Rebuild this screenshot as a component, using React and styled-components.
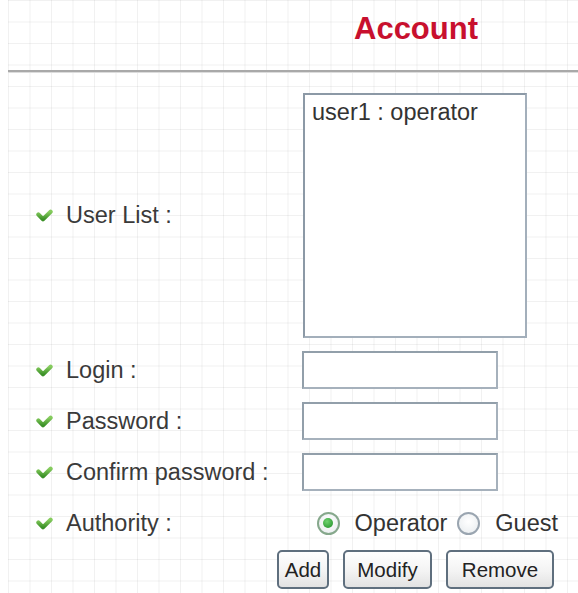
import React, { useState } from 'react';
import styled, { createGlobalStyle } from 'styled-components';

const GlobalStyle = createGlobalStyle`
  html, body {
    margin: 0;
    padding: 0;
    background: #ffffff;
  }
  body {
    font-family: "Liberation Sans", Arial, sans-serif;
    color: #333;
  }
`;

const Page = styled.div`
  width: 578px;
  min-height: 593px;
  box-sizing: border-box;
  padding-left: 8px;
  background-color: #fff;
  background-image:
    linear-gradient(to right, rgba(0, 0, 0, 0.055) 1px, transparent 1px),
    linear-gradient(to bottom, rgba(0, 0, 0, 0.055) 1px, transparent 1px);
  background-size: 21.5px 21.5px;
  background-position: 8px 0;
  background-clip: content-box;
`;

const Header = styled.div`
  display: grid;
  grid-template-columns: 294px 228px;
  height: 70px;
  align-items: center;
`;

const Title = styled.h1`
  grid-column: 2;
  margin: 0;
  padding-bottom: 12px;
  text-align: center;
  font-size: 31px;
  font-weight: bold;
  color: #c8102e;
`;

const Rule = styled.div`
  height: 2px;
  background: #a9a9a9;
  border-bottom: 1px solid #dcdcdc;
`;

const Form = styled.div`
  display: grid;
  grid-template-columns: 294px 1fr;
  row-gap: 13px;
  padding: 20px 20px 0 0;
  align-items: center;
`;

const Label = styled.div`
  display: flex;
  align-items: center;
  gap: 13px;
  padding-left: 28px;
  font-size: 23.5px;
  color: #3a3a3a;
  white-space: nowrap;
`;

const ListBox = styled.div`
  width: 224px;
  height: 245px;
  box-sizing: border-box;
  margin-left: 1px;
  padding: 3px 7px;
  background: #fff;
  border: 2px solid #a3afbb;
  border-top-color: #8c99a6;
  border-left-color: #8c99a6;
  font-size: 23.5px;
  line-height: 28px;
  color: #333;
`;

const TextInput = styled.input`
  width: 196px;
  height: 38px;
  box-sizing: border-box;
  margin: 0;
  border: 2px solid #a6b1bc;
  border-top-color: #929faa;
  border-left-color: #929faa;
  background: #fff;
  font-family: inherit;
  font-size: 20px;
  outline: none;
`;

const RadioGroup = styled.div`
  display: flex;
  align-items: center;
  justify-content: flex-end;
  height: 38px;
  font-size: 23.5px;
  color: #333;
`;

const RadioOption = styled.label`
  display: flex;
  align-items: center;
  gap: 15px;
  margin-left: ${(p) => p.offset || 0}px;
  cursor: pointer;
`;

const RadioDot = styled.span`
  width: 23px;
  height: 23px;
  box-sizing: border-box;
  border-radius: 50%;
  border: 2px solid ${(p) => (p.checked ? '#86a88c' : '#9aa5b0')};
  background: radial-gradient(circle at 50% 40%, #ffffff 0%, #eef1f3 70%, #dde2e6 100%);
  display: flex;
  align-items: center;
  justify-content: center;

  &::after {
    content: '';
    width: 10px;
    height: 10px;
    border-radius: 50%;
    background: radial-gradient(circle at 40% 35%, #6fd36f 0%, #2d9a34 80%);
    display: ${(p) => (p.checked ? 'block' : 'none')};
  }
`;

const ButtonRow = styled.div`
  grid-column: 1 / -1;
  display: flex;
  justify-content: flex-end;
  gap: 14px;
  padding-right: 4px;
  margin-top: -5px;
`;

const Button = styled.button`
  width: ${(p) => p.w}px;
  height: 39px;
  box-sizing: border-box;
  padding: 0;
  border: 2px solid #5f6f7e;
  border-radius: 5px;
  background: linear-gradient(to bottom, #ffffff 0%, #f3f3f3 55%, #e2e2e2 100%);
  font-family: "Liberation Sans", Arial, sans-serif;
  font-size: 20.5px;
  color: #222;
  cursor: pointer;
`;

const CheckIcon = () => (
  <svg width="17" height="13" viewBox="0 0 17 13" aria-hidden="true">
    <defs>
      <linearGradient id="chk" x1="0" y1="0" x2="0" y2="1">
        <stop offset="0" stopColor="#86cc5e" />
        <stop offset="1" stopColor="#3c9128" />
      </linearGradient>
    </defs>
    <path
      d="M2.4 5.6 L7 10.2 L14.6 2.8"
      fill="none"
      stroke="url(#chk)"
      strokeWidth="4.2"
      strokeLinecap="round"
      strokeLinejoin="round"
    />
  </svg>
);

const Field = ({ children }) => (
  <Label>
    <CheckIcon />
    <span>{children}</span>
  </Label>
);

export default function App() {
  const [authority, setAuthority] = useState('operator');

  return (
    <>
      <GlobalStyle />
      <Page>
        <Header>
          <Title>Account</Title>
        </Header>
        <Rule />
        <Form>
          <Field>User List :</Field>
          <ListBox role="listbox">
            <div>user1 : operator</div>
          </ListBox>

          <Field>Login :</Field>
          <TextInput type="text" />

          <Field>Password :</Field>
          <TextInput type="password" />

          <Field>Confirm password :</Field>
          <TextInput type="password" />

          <Field>Authority :</Field>
          <RadioGroup>
            <RadioOption onClick={() => setAuthority('operator')}>
              <RadioDot checked={authority === 'operator'} />
              Operator
            </RadioOption>
            <RadioOption offset={10} onClick={() => setAuthority('guest')}>
              <RadioDot checked={authority === 'guest'} />
              Guest
            </RadioOption>
          </RadioGroup>

          <ButtonRow>
            <Button w={52}>Add</Button>
            <Button w={89}>Modify</Button>
            <Button w={108}>Remove</Button>
          </ButtonRow>
        </Form>
      </Page>
    </>
  );
}
